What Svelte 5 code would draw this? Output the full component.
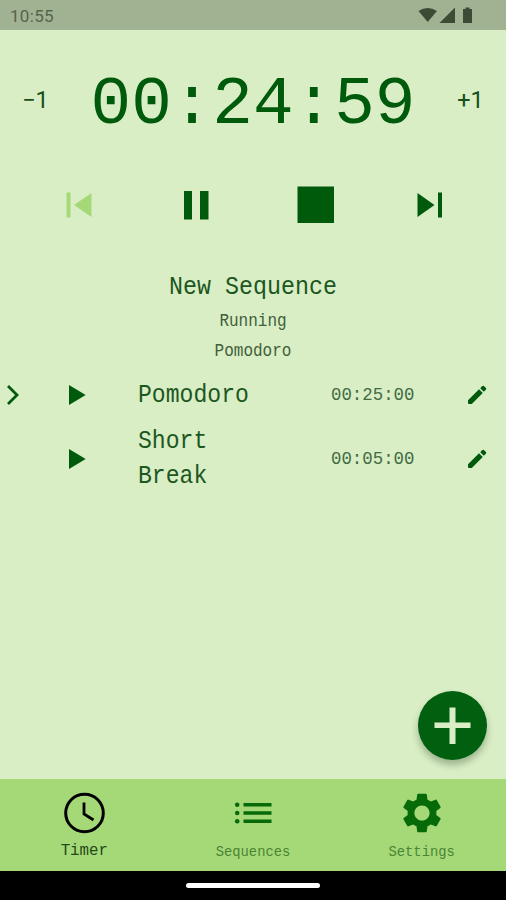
<script lang="ts">
  let activeTab = $state('Timer');
  let current = $state(0);

  const sequence = {
    name: 'New Sequence',
    timers: [
      { name: 'Pomodoro', time: '00:25:00' },
      { name: 'Short Break', time: '00:05:00' }
    ]
  };
</script>

<div class="screen">
  <header class="status-bar">
    <span class="clock">10:55</span>
    <svg class="status-icons" width="56" height="18" viewBox="0 0 56 18" fill="currentColor">
      <path d="M0.5 5Q9.5 -1 19 5L9.700 16Z" />
      <path d="M37 1.500V17H21.500Z" />
      <path d="M47.500 1.500h4V3h2.500v14h-9V3h2.500Z" />
    </svg>
  </header>

  <main>
    <!-- COUNTDOWN -->
    <section class="countdown">
      <button class="adjust">−1</button>
      <span class="mono remaining">00:24:59</span>
      <button class="adjust">+1</button>
    </section>

    <!-- CONTROLS -->
    <section class="controls">
      <button class="disabled" aria-label="Previous" disabled>
        <svg width="26" height="26" viewBox="0 0 26 26" fill="currentColor">
          <path d="M0.500 0.500h4v25h-4ZM25.500 1v24L8 13Z" />
        </svg>
      </button>
      <button aria-label="Pause">
        <svg width="26" height="30" viewBox="0 0 26 30" fill="currentColor">
          <path d="M1 1h8v28.500H1ZM17 1h8.500v28.500H17Z" />
        </svg>
      </button>
      <button aria-label="Stop">
        <svg width="37" height="37" viewBox="0 0 37 37" fill="currentColor">
          <path d="M0.500 0.500h36.500v36.500h-36.500Z" />
        </svg>
      </button>
      <button aria-label="Next">
        <svg width="26" height="26" viewBox="0 0 26 26" fill="currentColor">
          <path d="M0.500 1v24L17.500 13ZM21 0.500h4v25h-4Z" />
        </svg>
      </button>
    </section>

    <section class="summary">
      <h1><span class="mono">{sequence.name}</span></h1>
      <p><span class="mono">Running</span></p>
      <p><span class="mono">{sequence.timers[current].name}</span></p>
    </section>

    <!-- TIMER LIST -->
    <ul class="timers">
      {#each sequence.timers as timer, i}
        <li>
          <span class="marker">
            {#if i === current}
              <svg width="14" height="20" viewBox="0 0 14 20" fill="none" stroke="currentColor" stroke-width="2.8">
                <path d="M2 1L11 10L2 19" />
              </svg>
            {/if}
          </span>
          <button class="play" aria-label="Play" onclick={() => (current = i)}>
            <svg width="18" height="21" viewBox="0 0 18 21" fill="currentColor">
              <path d="M1 0v20L17.700 10Z" />
            </svg>
          </button>
          <span class="name">
            {#each timer.name.split(' ') as word}
              <span class="mono">{word}</span>
            {/each}
          </span>
          <span class="mono time">{timer.time}</span>
          <button class="edit" aria-label="Edit">
            <svg width="20" height="20" viewBox="0 0 20 20" fill="currentColor">
              <path d="M1 15.200L12 4.200L15.800 8L4.800 19H2Q1 19 1 18ZM13.200 3.200L15.300 1.100Q16.100 0.400 16.900 1.100L18.900 3.100Q19.600 3.900 18.900 4.700L16.800 6.800Z" />
            </svg>
          </button>
        </li>
      {/each}
    </ul>

    <button class="fab" aria-label="Add timer">
      <svg width="37" height="37" viewBox="0 0 37 37" fill="currentColor">
        <path d="M15.500 0.500h6v15h15v5.500h-15v16h-6V21h-15v-5.500h15Z" />
      </svg>
    </button>
  </main>

  <nav>
    <button class:active={activeTab === 'Timer'} onclick={() => (activeTab = 'Timer')}>
      <svg width="42" height="42" viewBox="0 0 42 42" fill="none" stroke="currentColor">
        <circle cx="21.500" cy="21" r="18.800" stroke-width="3" />
        <path d="M21 10.500V22L30.500 28" stroke-width="2.800" />
      </svg>
      <span class="mono">Timer</span>
    </button>
    <button class:active={activeTab === 'Sequences'} onclick={() => (activeTab = 'Sequences')}>
      <svg width="38" height="42" viewBox="0 0 38 42" fill="currentColor">
        <path d="M9.500 11h28v3.600h-28ZM9.500 19.200h28v3.600h-28ZM9.500 27.400h28V31h-28Z" />
        <circle cx="3.200" cy="12.800" r="2.300" />
        <circle cx="3.200" cy="21" r="2.300" />
        <circle cx="3.200" cy="29.200" r="2.300" />
      </svg>
      <span class="mono">Sequences</span>
    </button>
    <button class:active={activeTab === 'Settings'} onclick={() => (activeTab = 'Settings')}>
      <svg width="42" height="42" viewBox="1.500 1.500 21 21" fill="currentColor">
        <path d="M19.140 12.940c.04-.3.060-.61.060-.94s-.02-.64-.07-.94l2.030-1.580c.18-.14.230-.41.120-.61l-1.920-3.320c-.12-.22-.37-.29-.59-.22l-2.390.96c-.5-.38-1.030-.7-1.620-.94l-.36-2.540c-.04-.24-.24-.41-.48-.41h-3.840c-.24 0-.43.170-.47.410l-.36 2.540c-.59.240-1.130.570-1.620.940l-2.390-.96c-.22-.08-.47 0-.59.220L2.740 8.870c-.12.210-.08.470.120.610l2.030 1.580c-.05.300-.09.630-.09.940s.02.640.070.940l-2.030 1.580c-.18.140-.23.410-.12.610l1.920 3.320c.12.220.37.290.59.220l2.390-.96c.5.380 1.030.7 1.620.94l.36 2.540c.05.240.24.410.48.410h3.840c.24 0 .44-.17.470-.41l.36-2.540c.59-.24 1.130-.56 1.620-.94l2.390.96c.22.080.47 0 .59-.22l1.920-3.320c.12-.22.070-.47-.12-.61l-2.010-1.580zM12 15.800c-2.100 0-3.800-1.700-3.800-3.800s1.700-3.800 3.800-3.800 3.800 1.700 3.800 3.800-1.700 3.800-3.800 3.800z" />
      </svg>
      <span class="mono">Settings</span>
    </button>
  </nav>

  <div class="gesture-bar"><span class="handle"></span></div>
</div>

<style>
  :global(body) { background: #d9eec5; }

  .screen { width: 506px; height: 900px; display: flex; flex-direction: column; background: #d9eec5; color: #005a0c; overflow: hidden; }
  button { background: none; border: none; padding: 0; margin: 0; color: inherit; font: inherit; cursor: pointer; display: flex; align-items: center; justify-content: center; }
  svg { display: block; flex-shrink: 0; }

  /* Tall, narrow monospace lettering */
  .mono { display: inline-block; font-family: 'Liberation Mono', monospace; transform: scaleY(1.1); white-space: nowrap; }

  .status-bar { height: 30px; box-sizing: border-box; padding: 0 32px 0 10px; display: flex; align-items: center; justify-content: space-between; background: #a1b293; color: #3d4a35; }
  .clock { font-family: Roboto, sans-serif; font-size: 17px; letter-spacing: 0.3px; color: #55634c; padding-top: 1px; }

  main { flex: 1; min-height: 0; position: relative; }

  .countdown { height: 140px; padding: 0 22px; display: flex; align-items: center; justify-content: space-between; }
  .adjust { width: 27px; font-family: Roboto, sans-serif; font-size: 23.500px; color: #174f1a; }
  .remaining { font-size: 67.700px; line-height: 80px; padding-top: 9px; transform: scaleY(1.02); }

  .controls { height: 69px; padding-left: 20px; display: grid; grid-template-columns: 117px 117px 122px 107px; }
  .controls .disabled { color: #a5d977; }

  .summary { padding-top: 29px; display: flex; flex-direction: column; align-items: center; color: #1c5722; }
  h1, p { display: flex; margin: 0; font-weight: 400; }
  h1 { font-size: 23.300px; line-height: 39px; }
  p { font-size: 16px; line-height: 30px; color: #405f3a; }
  p .mono { transform: scaleY(1.12); }

  .timers { list-style: none; margin: -1px 0 0; padding: 0; }
  .timers li { display: grid; grid-template-columns: 68px 70px 193px 116px 59px; align-items: center; min-height: 58px; }
  .marker { padding-left: 6px; }
  .play { justify-content: flex-start; }
  .name { display: flex; flex-direction: column; align-items: flex-start; font-size: 23.100px; line-height: 35px; color: #1c5722; }
  .time { font-size: 17.400px; color: #436b42; transform: scaleY(1.08); }

  .fab { position: absolute; right: 19px; bottom: 19px; width: 69px; height: 69px; border-radius: 50%; background: #006010; color: #d9eec5; box-shadow: 0 5px 7px rgba(0, 30, 0, 0.28); }

  nav { height: 92px; display: grid; grid-template-columns: repeat(3, 1fr); background: #a5d977; color: #076a09; }
  nav button { flex-direction: column; justify-content: flex-start; padding-top: 13px; box-sizing: border-box; }
  nav .mono { font-size: 13.800px; line-height: 20px; margin-top: 9px; color: #4b8435; }
  nav .active { color: #000; }
  nav .active .mono { font-size: 15.800px; margin-top: 7px; color: #24491c; }

  .gesture-bar { height: 29px; background: #000; display: flex; align-items: center; justify-content: center; }
  .handle { width: 134px; height: 5px; border-radius: 3px; background: #fff; }
</style>
